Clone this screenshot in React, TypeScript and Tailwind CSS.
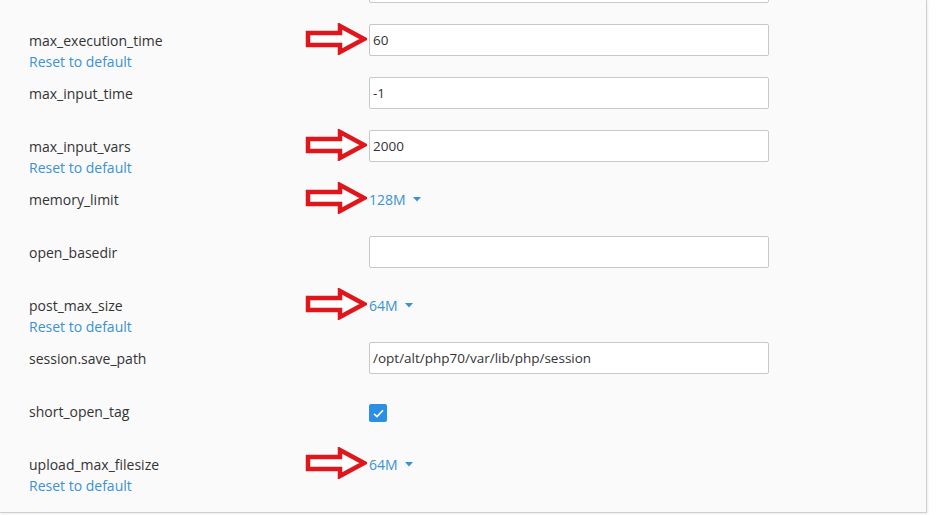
import React from "react"

type Row = {
  name: string
  kind: "input" | "select" | "check"
  value?: string
  reset?: boolean
  arrow?: boolean
}

const rows: Row[] = [
  { name: "", kind: "input", value: "" },
  { name: "max_execution_time", kind: "input", value: "60", reset: true, arrow: true },
  { name: "max_input_time", kind: "input", value: "-1" },
  { name: "max_input_vars", kind: "input", value: "2000", reset: true, arrow: true },
  { name: "memory_limit", kind: "select", value: "128M", arrow: true },
  { name: "open_basedir", kind: "input", value: "" },
  { name: "post_max_size", kind: "select", value: "64M", reset: true, arrow: true },
  { name: "session.save_path", kind: "input", value: "/opt/alt/php70/var/lib/php/session" },
  { name: "short_open_tag", kind: "check" },
  { name: "upload_max_filesize", kind: "select", value: "64M", reset: true, arrow: true },
]

function Arrow() {
  return (
    <svg
      width="62"
      height="32"
      viewBox="0 0 62 32"
      className="absolute left-[-64px] top-[-1px]"
    >
      <path
        d="M3 10 H35 V3 L59 16 L35 29 V22 H3 Z"
        fill="#ffffff"
        stroke="#e0161d"
        strokeWidth="4.5"
        strokeLinejoin="miter"
      />
    </svg>
  )
}

function Control({ row }: { row: Row }) {
  if (row.kind === "input") {
    return (
      <div className="flex h-[32px] w-[400px] items-center rounded-[2px] border border-[#c8c8c8] bg-white pl-[3px] text-[13.5px] text-[#333]">
        {row.value}
      </div>
    )
  }
  if (row.kind === "select") {
    return (
      <div className="flex h-[32px] items-center gap-[7px] text-[14px] text-[#3a92d2]">
        <span>{row.value}</span>
        <svg width="8" height="5" viewBox="0 0 8 5">
          <path d="M0 0 H8 L4 4.5 Z" fill="#3a92d2" />
        </svg>
      </div>
    )
  }
  return (
    <div className="pt-[9px]">
      <div className="flex h-[18px] w-[18px] items-center justify-center rounded-[2px] bg-[#2b8fe3]">
        <svg width="11" height="9" viewBox="0 0 11 9">
          <path d="M1 4.8 L4 7.6 L10 1.2" fill="none" stroke="#fff" strokeWidth="1.6" />
        </svg>
      </div>
    </div>
  )
}

export default function App() {
  return (
    <div className="min-h-[515px] w-[937px] bg-white font-['Open_Sans',sans-serif]">
      <div className="h-[513px] w-[927px] overflow-hidden border-r border-b border-[#cfcfcf] bg-[#fafafa] shadow-[1px_1px_2px_rgba(0,0,0,0.08)]">
        <div className="-mt-[39px]">
          {rows.map((row, i) => (
            <div key={i} className="flex h-[53px] pt-[10px]">
              <div className="w-[369px] shrink-0 pl-[29px] pt-[6px] text-[14px] leading-[21px]">
                <div className="text-[#333]">{row.name}</div>
                {row.reset && <div className="text-[#3a92d2]">Reset to default</div>}
              </div>
              <div className="relative">
                {row.arrow && <Arrow />}
                <Control row={row} />
              </div>
            </div>
          ))}
        </div>
      </div>
    </div>
  )
}
